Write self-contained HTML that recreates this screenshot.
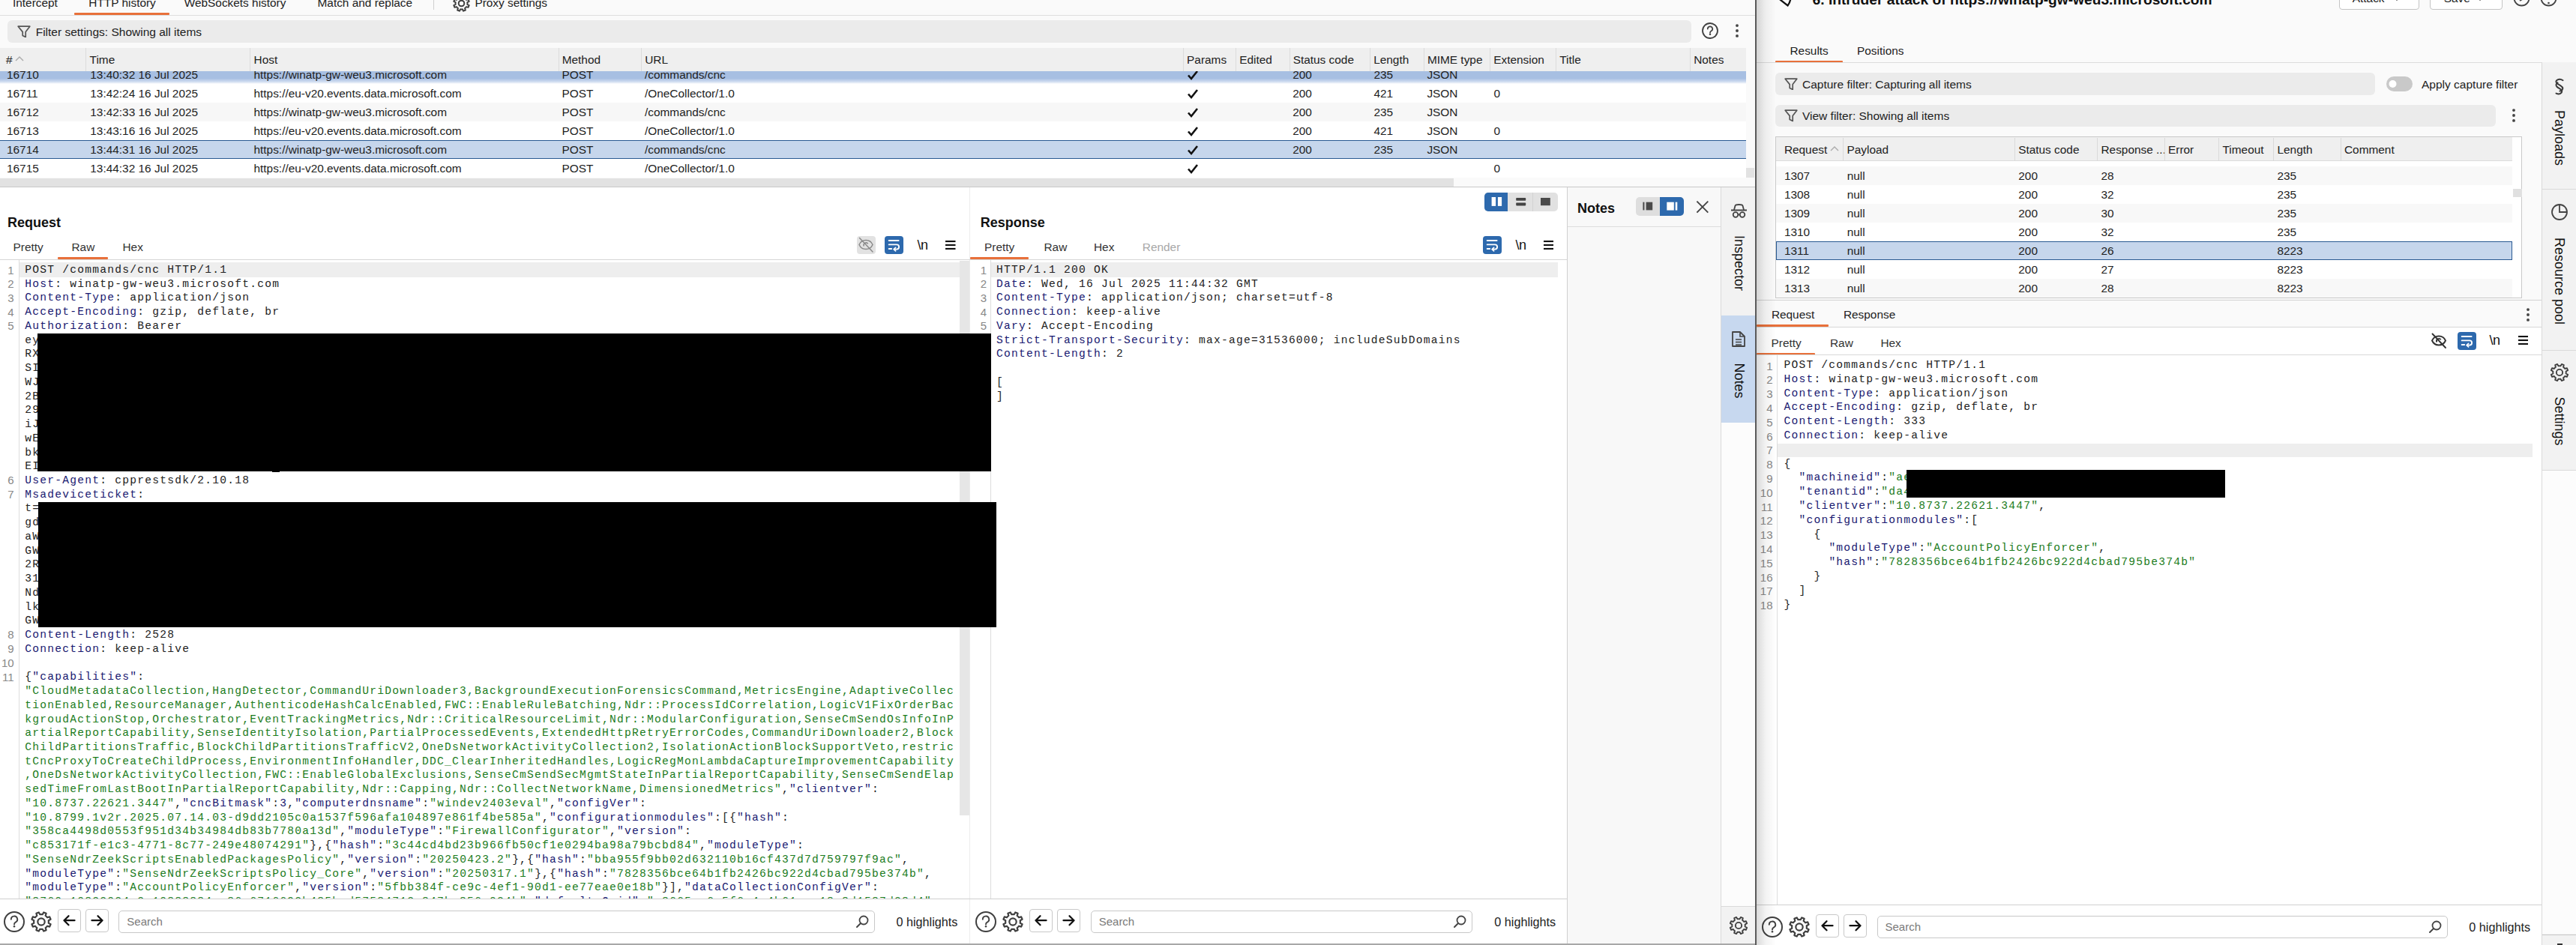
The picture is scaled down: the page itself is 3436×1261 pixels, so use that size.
<!DOCTYPE html><html><head><meta charset="utf-8"><style>
*{margin:0;padding:0;box-sizing:border-box}
html,body{width:3436px;height:1261px;overflow:hidden;background:#fafafa;font-family:"Liberation Sans",sans-serif;font-size:15px;color:#1f1f1f}
div,span.a,svg{position:absolute}
.t{white-space:pre}
.code{font-family:"Liberation Mono",monospace;font-size:14.6px;letter-spacing:1.239px;white-space:pre;color:#222}
.k{color:#181870}.g{color:#1b7c1c}.p{color:#222}
.ln{font-family:"Liberation Sans",sans-serif;font-size:15px;color:#888;text-align:right;white-space:pre}
</style></head><body>
<div class="t" style="left:17px;top:-6px;line-height:20px;font-size:15.4px;color:#222">Intercept</div>
<div class="t" style="left:118.3px;top:-6px;line-height:20px;font-size:15.4px;color:#222">HTTP history</div>
<div class="t" style="left:245.7px;top:-6px;line-height:20px;font-size:15.4px;color:#222">WebSockets history</div>
<div class="t" style="left:423.5px;top:-6px;line-height:20px;font-size:15.4px;color:#222">Match and replace</div>
<div class="t" style="left:633.4px;top:-6px;line-height:20px;font-size:15.4px;color:#222">Proxy settings</div>
<div style="left:99px;top:17px;width:127px;height:2.6px;background:#e8703a;border-radius:1px"></div>
<div style="left:578px;top:0px;width:1px;height:12.5px;background:#d0d0d0"></div>
<svg style="left:602.3px;top:-8.8px;" width="27" height="27" viewBox="0 0 27 27"><path d="M13.50,5.52 L14.87,5.64 L16.11,3.33 L18.84,4.46 L18.09,6.97 L19.14,7.86 L20.03,8.91 L22.54,8.16 L23.67,10.89 L21.36,12.13 L21.48,13.50 L21.36,14.87 L23.67,16.11 L22.54,18.84 L20.03,18.09 L19.14,19.14 L18.09,20.03 L18.84,22.54 L16.11,23.67 L14.87,21.36 L13.50,21.48 L12.13,21.36 L10.89,23.67 L8.16,22.54 L8.91,20.03 L7.86,19.14 L6.97,18.09 L4.46,18.84 L3.33,16.11 L5.64,14.87 L5.52,13.50 L5.64,12.13 L3.33,10.89 L4.46,8.16 L6.97,8.91 L7.86,7.86 L8.91,6.97 L8.16,4.46 L10.89,3.33 L12.13,5.64Z" fill="none" stroke="#404040" stroke-width="2" stroke-linejoin="round"/><circle cx="13.5" cy="13.5" r="3.78" fill="none" stroke="#404040" stroke-width="2"/></svg>
<div style="left:0px;top:20px;width:2341px;height:1px;background:#dedede"></div>
<div style="left:10px;top:27px;width:2246px;height:30px;background:#ebebeb;border-radius:6px"></div>
<svg style="left:22.5px;top:33.5px;" width="18" height="16.5" viewBox="0 0 18 16.5"><path d="M1.2,1.2 H16.8 L11.2,8.6 V15.5 L7.2,13.5 V8.6 Z" fill="none" stroke="#555" stroke-width="1.7" stroke-linejoin="round"/></svg>
<div class="t" style="left:47.7px;top:32.80px;line-height:20px;font-size:15.5px;color:#222">Filter settings: Showing all items</div>
<svg style="left:2268.9px;top:29.200000000000003px;" width="24" height="24" viewBox="0 0 24 24"><circle cx="12.0" cy="12.0" r="10" fill="none" stroke="#404040" stroke-width="1.8"/><g transform="translate(12.00,12.00) scale(0.769)"><path d="M-4.2,-3.2 a4.2,4.2 0 1 1 6.0,3.8 c-1.5,0.8 -1.8,1.5 -1.8,2.9" fill="none" stroke="#404040" stroke-width="2.22" stroke-linecap="round"/><circle cx="0" cy="6.3" r="1.62" fill="#404040"/></g></svg>
<svg style="left:2311px;top:31.200000000000003px;" width="12" height="20" viewBox="0 0 12 20"><circle cx="6" cy="3.1" r="1.95" fill="#444"/><circle cx="6" cy="10.0" r="1.95" fill="#444"/><circle cx="6" cy="16.9" r="1.95" fill="#444"/></svg>
<div style="left:0px;top:64px;width:2329px;height:30.5px;background:#efefef"></div>
<div class="t" style="left:8px;top:70.00px;line-height:20px;font-size:15.4px;color:#222">#</div>
<div style="left:114.4px;top:64px;width:1px;height:30.5px;background:#dcdcdc"></div>
<div class="t" style="left:119.60000000000001px;top:70.00px;line-height:20px;font-size:15.4px;color:#222">Time</div>
<div style="left:333.4px;top:64px;width:1px;height:30.5px;background:#dcdcdc"></div>
<div class="t" style="left:338.59999999999997px;top:70.00px;line-height:20px;font-size:15.4px;color:#222">Host</div>
<div style="left:744.5px;top:64px;width:1px;height:30.5px;background:#dcdcdc"></div>
<div class="t" style="left:749.7px;top:70.00px;line-height:20px;font-size:15.4px;color:#222">Method</div>
<div style="left:855px;top:64px;width:1px;height:30.5px;background:#dcdcdc"></div>
<div class="t" style="left:860.2px;top:70.00px;line-height:20px;font-size:15.4px;color:#222">URL</div>
<div style="left:1577.9px;top:64px;width:1px;height:30.5px;background:#dcdcdc"></div>
<div class="t" style="left:1583.1000000000001px;top:70.00px;line-height:20px;font-size:15.4px;color:#222">Params</div>
<div style="left:1648px;top:64px;width:1px;height:30.5px;background:#dcdcdc"></div>
<div class="t" style="left:1653.2px;top:70.00px;line-height:20px;font-size:15.4px;color:#222">Edited</div>
<div style="left:1719.5px;top:64px;width:1px;height:30.5px;background:#dcdcdc"></div>
<div class="t" style="left:1724.7px;top:70.00px;line-height:20px;font-size:15.4px;color:#222">Status code</div>
<div style="left:1827px;top:64px;width:1px;height:30.5px;background:#dcdcdc"></div>
<div class="t" style="left:1832.2px;top:70.00px;line-height:20px;font-size:15.4px;color:#222">Length</div>
<div style="left:1898.7px;top:64px;width:1px;height:30.5px;background:#dcdcdc"></div>
<div class="t" style="left:1903.9px;top:70.00px;line-height:20px;font-size:15.4px;color:#222">MIME type</div>
<div style="left:1987px;top:64px;width:1px;height:30.5px;background:#dcdcdc"></div>
<div class="t" style="left:1992.2px;top:70.00px;line-height:20px;font-size:15.4px;color:#222">Extension</div>
<div style="left:2075px;top:64px;width:1px;height:30.5px;background:#dcdcdc"></div>
<div class="t" style="left:2080.2px;top:70.00px;line-height:20px;font-size:15.4px;color:#222">Title</div>
<div style="left:2254px;top:64px;width:1px;height:30.5px;background:#dcdcdc"></div>
<div class="t" style="left:2259.2px;top:70.00px;line-height:20px;font-size:15.4px;color:#222">Notes</div>
<svg style="left:20px;top:74px;" width="12" height="8" viewBox="0 0 12 8"><path d="M1,7 L6,2 L11,7" fill="none" stroke="#aaa" stroke-width="1.4"/></svg>
<div style="left:0;top:94.5px;width:2329px;height:142.5px;overflow:hidden;background:#fff">
<div style="left:0;top:-7.5px;width:2329px;height:25px;background:linear-gradient(#a7bfe2 0%,#a7bfe2 70%,#cfdcf0 88%,#fff 100%)"></div>
<div class="t" style="left:9px;top:-5.00px;line-height:20px;font-size:15.4px;color:#1e1e1e">16710</div>
<div class="t" style="left:120.3px;top:-5.00px;line-height:20px;font-size:15.4px;color:#1e1e1e">13:40:32 16 Jul 2025</div>
<div class="t" style="left:338.5px;top:-5.00px;line-height:20px;font-size:15.4px;color:#1e1e1e">https://winatp-gw-weu3.microsoft.com</div>
<div class="t" style="left:749.4px;top:-5.00px;line-height:20px;font-size:15.4px;color:#1e1e1e">POST</div>
<div class="t" style="left:860px;top:-5.00px;line-height:20px;font-size:15.4px;color:#1e1e1e">/commands/cnc</div>
<div class="t" style="left:1724.2px;top:-5.00px;line-height:20px;font-size:15.4px;color:#1e1e1e">200</div>
<div class="t" style="left:1832.5px;top:-5.00px;line-height:20px;font-size:15.4px;color:#1e1e1e">235</div>
<div class="t" style="left:1903.4px;top:-5.00px;line-height:20px;font-size:15.4px;color:#1e1e1e">JSON</div>
<svg style="left:1581.6px;top:-4.0px;" width="18" height="18" viewBox="0 0 18 18"><path d="M3,9.5 L7,14 L15,4" fill="none" stroke="#111" stroke-width="2.6" stroke-linejoin="miter"/></svg>
<div style="left:0;top:17.5px;width:2329px;height:25px;background:#fff"></div>
<div class="t" style="left:9px;top:20.00px;line-height:20px;font-size:15.4px;color:#1e1e1e">16711</div>
<div class="t" style="left:120.3px;top:20.00px;line-height:20px;font-size:15.4px;color:#1e1e1e">13:42:24 16 Jul 2025</div>
<div class="t" style="left:338.5px;top:20.00px;line-height:20px;font-size:15.4px;color:#1e1e1e">https://eu-v20.events.data.microsoft.com</div>
<div class="t" style="left:749.4px;top:20.00px;line-height:20px;font-size:15.4px;color:#1e1e1e">POST</div>
<div class="t" style="left:860px;top:20.00px;line-height:20px;font-size:15.4px;color:#1e1e1e">/OneCollector/1.0</div>
<div class="t" style="left:1724.2px;top:20.00px;line-height:20px;font-size:15.4px;color:#1e1e1e">200</div>
<div class="t" style="left:1832.5px;top:20.00px;line-height:20px;font-size:15.4px;color:#1e1e1e">421</div>
<div class="t" style="left:1903.4px;top:20.00px;line-height:20px;font-size:15.4px;color:#1e1e1e">JSON</div>
<div class="t" style="left:1992.5px;top:20.00px;line-height:20px;font-size:15.4px;color:#1e1e1e">0</div>
<svg style="left:1581.6px;top:21.0px;" width="18" height="18" viewBox="0 0 18 18"><path d="M3,9.5 L7,14 L15,4" fill="none" stroke="#111" stroke-width="2.6" stroke-linejoin="miter"/></svg>
<div style="left:0;top:42.5px;width:2329px;height:25px;background:#f7f7f7"></div>
<div class="t" style="left:9px;top:45.00px;line-height:20px;font-size:15.4px;color:#1e1e1e">16712</div>
<div class="t" style="left:120.3px;top:45.00px;line-height:20px;font-size:15.4px;color:#1e1e1e">13:42:33 16 Jul 2025</div>
<div class="t" style="left:338.5px;top:45.00px;line-height:20px;font-size:15.4px;color:#1e1e1e">https://winatp-gw-weu3.microsoft.com</div>
<div class="t" style="left:749.4px;top:45.00px;line-height:20px;font-size:15.4px;color:#1e1e1e">POST</div>
<div class="t" style="left:860px;top:45.00px;line-height:20px;font-size:15.4px;color:#1e1e1e">/commands/cnc</div>
<div class="t" style="left:1724.2px;top:45.00px;line-height:20px;font-size:15.4px;color:#1e1e1e">200</div>
<div class="t" style="left:1832.5px;top:45.00px;line-height:20px;font-size:15.4px;color:#1e1e1e">235</div>
<div class="t" style="left:1903.4px;top:45.00px;line-height:20px;font-size:15.4px;color:#1e1e1e">JSON</div>
<svg style="left:1581.6px;top:46.0px;" width="18" height="18" viewBox="0 0 18 18"><path d="M3,9.5 L7,14 L15,4" fill="none" stroke="#111" stroke-width="2.6" stroke-linejoin="miter"/></svg>
<div style="left:0;top:67.5px;width:2329px;height:25px;background:#fff"></div>
<div class="t" style="left:9px;top:70.00px;line-height:20px;font-size:15.4px;color:#1e1e1e">16713</div>
<div class="t" style="left:120.3px;top:70.00px;line-height:20px;font-size:15.4px;color:#1e1e1e">13:43:16 16 Jul 2025</div>
<div class="t" style="left:338.5px;top:70.00px;line-height:20px;font-size:15.4px;color:#1e1e1e">https://eu-v20.events.data.microsoft.com</div>
<div class="t" style="left:749.4px;top:70.00px;line-height:20px;font-size:15.4px;color:#1e1e1e">POST</div>
<div class="t" style="left:860px;top:70.00px;line-height:20px;font-size:15.4px;color:#1e1e1e">/OneCollector/1.0</div>
<div class="t" style="left:1724.2px;top:70.00px;line-height:20px;font-size:15.4px;color:#1e1e1e">200</div>
<div class="t" style="left:1832.5px;top:70.00px;line-height:20px;font-size:15.4px;color:#1e1e1e">421</div>
<div class="t" style="left:1903.4px;top:70.00px;line-height:20px;font-size:15.4px;color:#1e1e1e">JSON</div>
<div class="t" style="left:1992.5px;top:70.00px;line-height:20px;font-size:15.4px;color:#1e1e1e">0</div>
<svg style="left:1581.6px;top:71.0px;" width="18" height="18" viewBox="0 0 18 18"><path d="M3,9.5 L7,14 L15,4" fill="none" stroke="#111" stroke-width="2.6" stroke-linejoin="miter"/></svg>
<div style="left:0;top:92.5px;width:2329px;height:25px;background:#c6d6ec;border-top:1px solid #2a5a92;border-bottom:1px solid #2a5a92"></div>
<div class="t" style="left:9px;top:95.00px;line-height:20px;font-size:15.4px;color:#1e1e1e">16714</div>
<div class="t" style="left:120.3px;top:95.00px;line-height:20px;font-size:15.4px;color:#1e1e1e">13:44:31 16 Jul 2025</div>
<div class="t" style="left:338.5px;top:95.00px;line-height:20px;font-size:15.4px;color:#1e1e1e">https://winatp-gw-weu3.microsoft.com</div>
<div class="t" style="left:749.4px;top:95.00px;line-height:20px;font-size:15.4px;color:#1e1e1e">POST</div>
<div class="t" style="left:860px;top:95.00px;line-height:20px;font-size:15.4px;color:#1e1e1e">/commands/cnc</div>
<div class="t" style="left:1724.2px;top:95.00px;line-height:20px;font-size:15.4px;color:#1e1e1e">200</div>
<div class="t" style="left:1832.5px;top:95.00px;line-height:20px;font-size:15.4px;color:#1e1e1e">235</div>
<div class="t" style="left:1903.4px;top:95.00px;line-height:20px;font-size:15.4px;color:#1e1e1e">JSON</div>
<svg style="left:1581.6px;top:96.0px;" width="18" height="18" viewBox="0 0 18 18"><path d="M3,9.5 L7,14 L15,4" fill="none" stroke="#111" stroke-width="2.6" stroke-linejoin="miter"/></svg>
<div style="left:0;top:117.5px;width:2329px;height:25px;background:#fff"></div>
<div class="t" style="left:9px;top:120.00px;line-height:20px;font-size:15.4px;color:#1e1e1e">16715</div>
<div class="t" style="left:120.3px;top:120.00px;line-height:20px;font-size:15.4px;color:#1e1e1e">13:44:32 16 Jul 2025</div>
<div class="t" style="left:338.5px;top:120.00px;line-height:20px;font-size:15.4px;color:#1e1e1e">https://eu-v20.events.data.microsoft.com</div>
<div class="t" style="left:749.4px;top:120.00px;line-height:20px;font-size:15.4px;color:#1e1e1e">POST</div>
<div class="t" style="left:860px;top:120.00px;line-height:20px;font-size:15.4px;color:#1e1e1e">/OneCollector/1.0</div>
<div class="t" style="left:1992.5px;top:120.00px;line-height:20px;font-size:15.4px;color:#1e1e1e">0</div>
<svg style="left:1581.6px;top:121.0px;" width="18" height="18" viewBox="0 0 18 18"><path d="M3,9.5 L7,14 L15,4" fill="none" stroke="#111" stroke-width="2.6" stroke-linejoin="miter"/></svg>
</div>
<div style="left:0px;top:237.6px;width:1939px;height:11px;background:#e2e2e2"></div>
<div style="left:2329.3px;top:224.4px;width:11px;height:12.4px;background:#e2e2e2"></div>
<div style="left:0px;top:249px;width:2341px;height:1.2px;background:#c8c8c8"></div>
<div style="left:0px;top:250px;width:1293px;height:1009px;background:#fff"></div>
<div class="t" style="left:10px;top:285px;line-height:24px;font-size:18px;font-weight:bold;color:#111">Request</div>
<div class="t" style="left:17.5px;top:320.20px;line-height:20px;font-size:15.4px;color:#333">Pretty</div>
<div class="t" style="left:95.5px;top:320.20px;line-height:20px;font-size:15.4px;color:#333">Raw</div>
<div class="t" style="left:163.5px;top:320.20px;line-height:20px;font-size:15.4px;color:#333">Hex</div>
<div style="left:76.5px;top:343px;width:67.5px;height:3px;background:#e8703a;border-radius:1px"></div>
<div style="left:0px;top:345.8px;width:1293px;height:1px;background:#d6d6d6"></div>
<div style="left:1143px;top:315px;width:24.5px;height:23.5px;background:#e2e2e2;border-radius:4px"></div>
<svg style="left:1143px;top:315px;" width="24.5" height="23.5" viewBox="0 0 24.5 23.5"><path d="M3,11.5 C6.5,3.5 17.5,3.5 21,11.5 C17.5,19.5 6.5,19.5 3,11.5 Z" fill="none" stroke="#8a8a8a" stroke-width="1.5"/><path d="M9.3,13.5 a3.2,3.2 0 0 1 5.5,-3.2" fill="none" stroke="#8a8a8a" stroke-width="1.5"/><path d="M3.5,2.5 L21,21" stroke="#8a8a8a" stroke-width="1.5" stroke-linecap="round"/></svg>
<div style="left:1180px;top:315px;width:24.6px;height:23.5px;background:#2d69ad;border-radius:4px"></div>
<svg style="left:1180px;top:315px;" width="24.6" height="23.5" viewBox="0 0 24.6 23.5"><path d="M5.7,6.0 H18.6 M5.7,11.4 H16 a3.1,3.1 0 0 1 0,6.2 H12.6 M5.7,17.0 H9.2" fill="none" stroke="#fff" stroke-width="1.9" stroke-linecap="round"/><path d="M14.6,15.3 L12.2,17.6 L14.6,19.9" fill="none" stroke="#fff" stroke-width="1.7" stroke-linecap="round" stroke-linejoin="round"/></svg>
<div class="t" style="left:1223.6px;top:316.00px;line-height:22px;font-size:18px;color:#111;letter-spacing:-0.5px">\n</div>
<svg style="left:1261px;top:321.0px;" width="13.5" height="14" viewBox="0 0 13.5 14"><rect x="0" y="0.00" width="13.5" height="2.1" fill="#111"/><rect x="0" y="4.95" width="13.5" height="2.1" fill="#111"/><rect x="0" y="9.90" width="13.5" height="2.1" fill="#111"/></svg>
<div style="left:25.3px;top:346.8px;width:1px;height:852.2px;background:#dddddd"></div>
<div style="left:26px;top:349.8px;width:1254px;height:20px;background:#eeeeee"></div>
<div style="left:0;top:347.5px;width:1280px;height:851.5px;overflow:hidden">
<div class="ln" style="left:0;top:3.50px;width:18.7px;line-height:18.73px;top:4.00px">1</div>
<div class="ln" style="left:0;top:22.23px;width:18.7px;line-height:18.73px;top:22.73px">2</div>
<div class="ln" style="left:0;top:40.96px;width:18.7px;line-height:18.73px;top:41.46px">3</div>
<div class="ln" style="left:0;top:59.69px;width:18.7px;line-height:18.73px;top:60.19px">4</div>
<div class="ln" style="left:0;top:78.42px;width:18.7px;line-height:18.73px;top:78.92px">5</div>
<div class="ln" style="left:0;top:284.45px;width:18.7px;line-height:18.73px;top:284.95px">6</div>
<div class="ln" style="left:0;top:303.18px;width:18.7px;line-height:18.73px;top:303.68px">7</div>
<div class="ln" style="left:0;top:490.48px;width:18.7px;line-height:18.73px;top:490.98px">8</div>
<div class="ln" style="left:0;top:509.21px;width:18.7px;line-height:18.73px;top:509.71px">9</div>
<div class="ln" style="left:0;top:527.94px;width:18.7px;line-height:18.73px;top:528.44px">10</div>
<div class="ln" style="left:0;top:546.67px;width:18.7px;line-height:18.73px;top:547.17px">11</div>
<div class="code" style="left:33.3px;top:3.5px;line-height:18.73px">POST /commands/cnc HTTP/1.1
<span class="k">Host</span>: winatp-gw-weu3.microsoft.com
<span class="k">Content-Type</span>: application/json
<span class="k">Accept-Encoding</span>: gzip, deflate, br
<span class="k">Authorization</span>: Bearer
ey
RX
SI
WJ
2B
29
iJ
wE
bk
EI
<span class="k">User-Agent</span>: cpprestsdk/2.10.18
<span class="k">Msadeviceticket</span>:
t=
gd
aW
GW
2R
31
Nd
lk
GW
<span class="k">Content-Length</span>: 2528
<span class="k">Connection</span>: keep-alive

{<span class="k">"capabilities"</span>:
<span class="g">"CloudMetadataCollection,HangDetector,CommandUriDownloader3,BackgroundExecutionForensicsCommand,MetricsEngine,AdaptiveCollec</span>
<span class="g">tionEnabled,ResourceManager,AuthenticodeHashCalcEnabled,FWC::EnableRuleBatching,Ndr::ProcessIdCorrelation,LogicV1FixOrderBac</span>
<span class="g">kgroudActionStop,Orchestrator,EventTrackingMetrics,Ndr::CriticalResourceLimit,Ndr::ModularConfiguration,SenseCmSendOsInfoInP</span>
<span class="g">artialReportCapability,SenseIdentityIsolation,PartialProcessedEvents,ExtendedHttpRetryErrorCodes,CommandUriDownloader2,Block</span>
<span class="g">ChildPartitionsTraffic,BlockChildPartitionsTrafficV2,OneDsNetworkActivityCollection2,IsolationActionBlockSupportVeto,restric</span>
<span class="g">tCncProxyToCreateChildProcess,EnvironmentInfoHandler,DDC_ClearInheritedHandles,LogicRegMonLambdaCaptureImprovementCapability</span>
<span class="g">,OneDsNetworkActivityCollection,FWC::EnableGlobalExclusions,SenseCmSendSecMgmtStateInPartialReportCapability,SenseCmSendElap</span>
<span class="g">sedTimeFromLastBootInPartialReportCapability,Ndr::Capping,Ndr::CollectNetworkName,DimensionedMetrics"</span>,<span class="k">"clientver"</span>:
<span class="g">"10.8737.22621.3447"</span>,<span class="k">"cncBitmask"</span>:<span class="k">3</span>,<span class="k">"computerdnsname"</span>:<span class="g">"windev2403eval"</span>,<span class="k">"configVer"</span>:
<span class="g">"10.8799.1v2r.2025.07.14.03-d9dd2105c0a1537f596afa104897e861f4be585a"</span>,<span class="k">"configurationmodules"</span>:[{<span class="k">"hash"</span>:
<span class="g">"358ca4498d0553f951d34b34984db83b7780a13d"</span>,<span class="k">"moduleType"</span>:<span class="g">"FirewallConfigurator"</span>,<span class="k">"version"</span>:
<span class="g">"c853171f-e1c3-4771-8c77-249e48074291"</span>},{<span class="k">"hash"</span>:<span class="g">"3c44cd4bd23b966fb50cf1e0294ba98a79bcbd84"</span>,<span class="k">"moduleType"</span>:
<span class="g">"SenseNdrZeekScriptsEnabledPackagesPolicy"</span>,<span class="k">"version"</span>:<span class="g">"20250423.2"</span>},{<span class="k">"hash"</span>:<span class="g">"bba955f9bb02d632110b16cf437d7d759797f9ac"</span>,
<span class="k">"moduleType"</span>:<span class="g">"SenseNdrZeekScriptsPolicy_Core"</span>,<span class="k">"version"</span>:<span class="g">"20250317.1"</span>},{<span class="k">"hash"</span>:<span class="g">"7828356bce64b1fb2426bc922d4cbad795be374b"</span>,
<span class="k">"moduleType"</span>:<span class="g">"AccountPolicyEnforcer"</span>,<span class="k">"version"</span>:<span class="g">"5fbb384f-ce9c-4ef1-90d1-ee77eae0e18b"</span>}],<span class="k">"dataCollectionConfigVer"</span>:
<span class="g">"8760-10822024-2-10888884-a86-6716692b485b-d57584712-847b-856-024b"</span>,<span class="k">"defaultsGuid"</span>:<span class="g">"c8665ac6c5f6c4c4b61ace18c8d1587d28d4"</span></div>
</div>
<div style="left:1280px;top:347.5px;width:12.5px;height:740px;background:#e6e6e6"></div>
<div style="left:1292.6px;top:250px;width:1px;height:1009px;background:#ececec"></div>
<div style="left:0px;top:1199px;width:1293px;height:1px;background:#d0d0d0"></div>
<svg style="left:4.0px;top:1214.5px;" width="30" height="30" viewBox="0 0 30 30"><circle cx="15.0" cy="15.0" r="13" fill="none" stroke="#404040" stroke-width="2"/><g transform="translate(15.00,15.00) scale(1.000)"><path d="M-4.2,-3.2 a4.2,4.2 0 1 1 6.0,3.8 c-1.5,0.8 -1.8,1.5 -1.8,2.9" fill="none" stroke="#404040" stroke-width="1.90" stroke-linecap="round"/><circle cx="0" cy="6.3" r="1.25" fill="#404040"/></g></svg>
<svg style="left:39.0px;top:1213.5px;" width="32" height="32" viewBox="0 0 32 32"><path d="M16.00,6.12 L17.70,6.27 L19.23,3.41 L22.62,4.81 L21.68,7.92 L22.99,9.01 L24.08,10.32 L27.19,9.38 L28.59,12.77 L25.73,14.30 L25.88,16.00 L25.73,17.70 L28.59,19.23 L27.19,22.62 L24.08,21.68 L22.99,22.99 L21.68,24.08 L22.62,27.19 L19.23,28.59 L17.70,25.73 L16.00,25.88 L14.30,25.73 L12.77,28.59 L9.38,27.19 L10.32,24.08 L9.01,22.99 L7.92,21.68 L4.81,22.62 L3.41,19.23 L6.27,17.70 L6.12,16.00 L6.27,14.30 L3.41,12.77 L4.81,9.38 L7.92,10.32 L9.01,9.01 L10.32,7.92 L9.38,4.81 L12.77,3.41 L14.30,6.27Z" fill="none" stroke="#404040" stroke-width="2.2" stroke-linejoin="round"/><circle cx="16.0" cy="16.0" r="4.68" fill="none" stroke="#404040" stroke-width="2.2"/></svg>
<div style="left:76.5px;top:1213.2px;width:31px;height:30.5px;border:1px solid #c8c8c8;border-radius:4px;background:#fff"></div>
<svg style="left:76.5px;top:1213.2px;" width="31" height="30.5" viewBox="0 0 31 30.5"><path d="M22.5,15.2 H8.5 M14.5,9.2 L8.5,15.2 L14.5,21.2" fill="none" stroke="#111" stroke-width="2.3" stroke-linecap="round" stroke-linejoin="round"/></svg>
<div style="left:114.3px;top:1213.2px;width:31px;height:30.5px;border:1px solid #c8c8c8;border-radius:4px;background:#fff"></div>
<svg style="left:114.3px;top:1213.2px;" width="31" height="30.5" viewBox="0 0 31 30.5"><path d="M8.5,15.2 H22.5 M16.5,9.2 L22.5,15.2 L16.5,21.2" fill="none" stroke="#111" stroke-width="2.3" stroke-linecap="round" stroke-linejoin="round"/></svg>
<div style="left:158.3px;top:1214.5px;width:1008.7px;height:30px;border:1px solid #c8c8c8;border-radius:5px;background:#fff"></div>
<div class="t" style="left:169.3px;top:1219.50px;line-height:20px;color:#7a7a7a;font-size:15px">Search</div>
<svg style="left:1141px;top:1220.5px;" width="18" height="18" viewBox="0 0 18 18"><circle cx="11" cy="7" r="5.5" fill="none" stroke="#444" stroke-width="1.8"/><path d="M7,11 L2,16" stroke="#444" stroke-width="2" stroke-linecap="round"/></svg>
<div class="t" style="left:1195.5px;top:1219.50px;line-height:20px;color:#222;font-size:16.2px">0 highlights</div>
<div style="left:1293.6px;top:250px;width:797px;height:1009px;background:#fff"></div>
<div class="t" style="left:1307.8px;top:285px;line-height:24px;font-size:18px;font-weight:bold;color:#111">Response</div>
<div style="left:1980px;top:257px;width:97.5px;height:25px;background:#e1e1e1;border-radius:5px"></div>
<div style="left:1980px;top:257px;width:31px;height:25px;background:#2d69ad;border-radius:5px 0 0 5px"></div>
<div style="left:2044.3px;top:257px;width:1px;height:25px;background:#d2d2d2"></div>
<svg style="left:1980px;top:257px;" width="97.5" height="25" viewBox="0 0 97.5 25"><rect x="9.6" y="6" width="5.5" height="11.9" fill="#fff"/><rect x="17.9" y="6" width="5.2" height="11.9" fill="#fff"/><rect x="42.2" y="7" width="13" height="3.7" rx="0.8" fill="#444"/><rect x="42.2" y="13.6" width="13" height="3.8" rx="0.8" fill="#444"/><rect x="75" y="7" width="12.8" height="10.2" fill="#4a4a4a"/></svg>
<div class="t" style="left:1313px;top:320.20px;line-height:20px;font-size:15.4px;color:#333">Pretty</div>
<div class="t" style="left:1392.5px;top:320.20px;line-height:20px;font-size:15.4px;color:#333">Raw</div>
<div class="t" style="left:1459px;top:320.20px;line-height:20px;font-size:15.4px;color:#333">Hex</div>
<div class="t" style="left:1523.8px;top:320.20px;line-height:20px;font-size:15.4px;color:#a8a8a8">Render</div>
<div style="left:1294px;top:343px;width:78.4px;height:3px;background:#e8703a;border-radius:1px"></div>
<div style="left:1293px;top:345.8px;width:797px;height:1px;background:#d6d6d6"></div>
<div style="left:1977.7px;top:315.3px;width:25.3px;height:23.5px;background:#2d69ad;border-radius:4px"></div>
<svg style="left:1977.7px;top:315.3px;" width="25.3" height="23.5" viewBox="0 0 25.3 23.5"><path d="M5.7,6.0 H18.6 M5.7,11.4 H16 a3.1,3.1 0 0 1 0,6.2 H12.6 M5.7,17.0 H9.2" fill="none" stroke="#fff" stroke-width="1.9" stroke-linecap="round"/><path d="M14.6,15.3 L12.2,17.6 L14.6,19.9" fill="none" stroke="#fff" stroke-width="1.7" stroke-linecap="round" stroke-linejoin="round"/></svg>
<div class="t" style="left:2021.6px;top:316.00px;line-height:22px;font-size:18px;color:#111;letter-spacing:-0.5px">\n</div>
<svg style="left:2058.8px;top:321.0px;" width="13.5" height="14" viewBox="0 0 13.5 14"><rect x="0" y="0.00" width="13.5" height="2.1" fill="#111"/><rect x="0" y="4.95" width="13.5" height="2.1" fill="#111"/><rect x="0" y="9.90" width="13.5" height="2.1" fill="#111"/></svg>
<div style="left:1321.3px;top:346.8px;width:1px;height:852.2px;background:#dddddd"></div>
<div style="left:1322px;top:349.8px;width:756px;height:20px;background:#eeeeee"></div>
<div class="ln" style="left:1293px;top:351.50px;width:23px;line-height:18.73px">1</div>
<div class="ln" style="left:1293px;top:370.23px;width:23px;line-height:18.73px">2</div>
<div class="ln" style="left:1293px;top:388.96px;width:23px;line-height:18.73px">3</div>
<div class="ln" style="left:1293px;top:407.69px;width:23px;line-height:18.73px">4</div>
<div class="ln" style="left:1293px;top:426.42px;width:23px;line-height:18.73px">5</div>
<div class="ln" style="left:1293px;top:445.15px;width:23px;line-height:18.73px">6</div>
<div class="ln" style="left:1293px;top:463.88px;width:23px;line-height:18.73px">7</div>
<div class="ln" style="left:1293px;top:482.61px;width:23px;line-height:18.73px">8</div>
<div class="ln" style="left:1293px;top:501.34px;width:23px;line-height:18.73px">9</div>
<div class="ln" style="left:1293px;top:520.07px;width:23px;line-height:18.73px">10</div>
<div class="code" style="left:1329px;top:351.0px;line-height:18.73px">HTTP/1.1 200 OK
<span class="k">Date</span>: Wed, 16 Jul 2025 11:44:32 GMT
<span class="k">Content-Type</span>: application/json; charset=utf-8
<span class="k">Connection</span>: keep-alive
<span class="k">Vary</span>: Accept-Encoding
<span class="k">Strict-Transport-Security</span>: max-age=31536000; includeSubDomains
<span class="k">Content-Length</span>: 2

[
]</div>
<div style="left:2090.2px;top:250px;width:1px;height:1009px;background:#d0d0d0"></div>
<div style="left:1293px;top:1199px;width:797px;height:1px;background:#d0d0d0"></div>
<svg style="left:1300.2px;top:1214.5px;" width="30" height="30" viewBox="0 0 30 30"><circle cx="15.0" cy="15.0" r="13" fill="none" stroke="#404040" stroke-width="2"/><g transform="translate(15.00,15.00) scale(1.000)"><path d="M-4.2,-3.2 a4.2,4.2 0 1 1 6.0,3.8 c-1.5,0.8 -1.8,1.5 -1.8,2.9" fill="none" stroke="#404040" stroke-width="1.90" stroke-linecap="round"/><circle cx="0" cy="6.3" r="1.25" fill="#404040"/></g></svg>
<svg style="left:1335.0px;top:1213.5px;" width="32" height="32" viewBox="0 0 32 32"><path d="M16.00,6.12 L17.70,6.27 L19.23,3.41 L22.62,4.81 L21.68,7.92 L22.99,9.01 L24.08,10.32 L27.19,9.38 L28.59,12.77 L25.73,14.30 L25.88,16.00 L25.73,17.70 L28.59,19.23 L27.19,22.62 L24.08,21.68 L22.99,22.99 L21.68,24.08 L22.62,27.19 L19.23,28.59 L17.70,25.73 L16.00,25.88 L14.30,25.73 L12.77,28.59 L9.38,27.19 L10.32,24.08 L9.01,22.99 L7.92,21.68 L4.81,22.62 L3.41,19.23 L6.27,17.70 L6.12,16.00 L6.27,14.30 L3.41,12.77 L4.81,9.38 L7.92,10.32 L9.01,9.01 L10.32,7.92 L9.38,4.81 L12.77,3.41 L14.30,6.27Z" fill="none" stroke="#404040" stroke-width="2.2" stroke-linejoin="round"/><circle cx="16.0" cy="16.0" r="4.68" fill="none" stroke="#404040" stroke-width="2.2"/></svg>
<div style="left:1373px;top:1213.2px;width:31px;height:30.5px;border:1px solid #c8c8c8;border-radius:4px;background:#fff"></div>
<svg style="left:1373px;top:1213.2px;" width="31" height="30.5" viewBox="0 0 31 30.5"><path d="M22.5,15.2 H8.5 M14.5,9.2 L8.5,15.2 L14.5,21.2" fill="none" stroke="#111" stroke-width="2.3" stroke-linecap="round" stroke-linejoin="round"/></svg>
<div style="left:1410.4px;top:1213.2px;width:31px;height:30.5px;border:1px solid #c8c8c8;border-radius:4px;background:#fff"></div>
<svg style="left:1410.4px;top:1213.2px;" width="31" height="30.5" viewBox="0 0 31 30.5"><path d="M8.5,15.2 H22.5 M16.5,9.2 L22.5,15.2 L16.5,21.2" fill="none" stroke="#111" stroke-width="2.3" stroke-linecap="round" stroke-linejoin="round"/></svg>
<div style="left:1454.7px;top:1214.5px;width:509.5px;height:30px;border:1px solid #c8c8c8;border-radius:5px;background:#fff"></div>
<div class="t" style="left:1465.7px;top:1219.50px;line-height:20px;color:#7a7a7a;font-size:15px">Search</div>
<svg style="left:1938.2px;top:1220.5px;" width="18" height="18" viewBox="0 0 18 18"><circle cx="11" cy="7" r="5.5" fill="none" stroke="#444" stroke-width="1.8"/><path d="M7,11 L2,16" stroke="#444" stroke-width="2" stroke-linecap="round"/></svg>
<div class="t" style="left:1993.3px;top:1219.50px;line-height:20px;color:#222;font-size:16.2px">0 highlights</div>
<div style="left:2091px;top:250px;width:204.5px;height:1009px;background:#f8f8f8"></div>
<div class="t" style="left:2104px;top:265.7px;line-height:24px;font-size:18px;font-weight:bold;color:#111">Notes</div>
<div style="left:2181.8px;top:263.2px;width:64px;height:24.6px;background:#dedede;border-radius:5px"></div>
<div style="left:2214px;top:263.2px;width:31.8px;height:24.6px;background:#2d69ad;border-radius:0 5px 5px 0"></div>
<svg style="left:2181.8px;top:263.2px;" width="64" height="24.6" viewBox="0 0 64 24.6"><rect x="9.4" y="6.7" width="2.0" height="10.7" fill="#4a4a4a"/><rect x="13.6" y="6.7" width="8.6" height="10.7" fill="#4a4a4a"/><rect x="41.3" y="6.7" width="9.5" height="10.9" fill="#fff"/><rect x="52.7" y="6.7" width="2.6" height="10.9" fill="#fff"/></svg>
<svg style="left:2261px;top:267px;" width="20" height="19" viewBox="0 0 20 19"><path d="M2.4,1.7 L17.3,16.7 M17.3,1.7 L2.4,16.7" stroke="#444" stroke-width="1.9"/></svg>
<div style="left:2091px;top:302px;width:204.5px;height:1px;background:#dcdcdc"></div>
<div style="left:2295.3px;top:250px;width:46px;height:1009px;background:#f2f2f2"></div>
<div style="left:2295.3px;top:250px;width:1px;height:1009px;background:#dadada"></div>
<svg style="left:2307px;top:270px;" width="25" height="22" viewBox="0 0 25 22"><path d="M6,10 L7.5,4.5 C8,2.5 17,2.5 17.5,4.5 L19,10" fill="none" stroke="#444" stroke-width="1.8"/><path d="M2,10.5 H23" stroke="#444" stroke-width="2"/><circle cx="8" cy="16.5" r="3.3" fill="none" stroke="#444" stroke-width="1.8"/><circle cx="17" cy="16.5" r="3.3" fill="none" stroke="#444" stroke-width="1.8"/><path d="M11.3,16.5 H13.7" stroke="#444" stroke-width="1.8"/></svg>
<div class="t" style="left:2319.5px;top:350.7px;line-height:20px;font-size:18px;color:#111;transform:translate(-50%,-50%) rotate(90deg)">Inspector</div>
<div style="left:2296.3px;top:421px;width:45px;height:143px;background:#c7d8ef"></div>
<svg style="left:2309px;top:441px;" width="20" height="23" viewBox="0 0 20 23"><path d="M2,2 H12 L18,8 V21 H2 Z" fill="none" stroke="#444" stroke-width="1.8" stroke-linejoin="round"/><path d="M12,2 V8 H18" fill="none" stroke="#444" stroke-width="1.6"/><path d="M6,12 H14 M6,15.5 H14 M6,19 H14" stroke="#444" stroke-width="1.6"/></svg>
<div class="t" style="left:2319.5px;top:508.4px;line-height:20px;font-size:18px;color:#111;transform:translate(-50%,-50%) rotate(90deg)">Notes</div>
<div style="left:2296.3px;top:564px;width:45px;height:645px;background:#fcfcfc"></div>
<div style="left:2296.3px;top:1209.3px;width:45px;height:1px;background:#dadada"></div>
<svg style="left:2305.3px;top:1221.0px;" width="28" height="28" viewBox="0 0 28 28"><path d="M14.00,5.26 L15.50,5.39 L16.86,2.86 L19.85,4.10 L19.03,6.85 L20.18,7.82 L21.15,8.97 L23.90,8.15 L25.14,11.14 L22.61,12.50 L22.74,14.00 L22.61,15.50 L25.14,16.86 L23.90,19.85 L21.15,19.03 L20.18,20.18 L19.03,21.15 L19.85,23.90 L16.86,25.14 L15.50,22.61 L14.00,22.74 L12.50,22.61 L11.14,25.14 L8.15,23.90 L8.97,21.15 L7.82,20.18 L6.85,19.03 L4.10,19.85 L2.86,16.86 L5.39,15.50 L5.26,14.00 L5.39,12.50 L2.86,11.14 L4.10,8.15 L6.85,8.97 L7.82,7.82 L8.97,6.85 L8.15,4.10 L11.14,2.86 L12.50,5.39Z" fill="none" stroke="#404040" stroke-width="1.9" stroke-linejoin="round"/><circle cx="14.0" cy="14.0" r="4.14" fill="none" stroke="#404040" stroke-width="1.9"/></svg>
<div style="left:0px;top:1259px;width:2341px;height:2px;background:#a8a8a8"></div>
<div style="left:2341px;top:0px;width:1095px;height:1261px;background:#fafafa"></div>
<div class="t" style="left:2417.6px;top:-12.5px;line-height:24px;font-size:19.2px;font-weight:bold;color:#111">6. Intruder attack of https://winatp-gw-weu3.microsoft.com</div>
<svg style="left:2368px;top:-6px;" width="26" height="16" viewBox="0 0 26 16"><path d="M2,2 L16.5,13.5 Q20,9 20.5,3" fill="none" stroke="#111" stroke-width="2.3" stroke-linejoin="miter"/></svg>
<div style="left:3119.6px;top:-10px;width:107.70000000000027px;height:22.5px;border:1px solid #c4c4c4;border-radius:4px;background:#fff"></div>
<div class="t" style="left:3137.7999999999997px;top:-12.4px;line-height:20px;font-size:15.4px;color:#222">Attack</div>
<svg style="left:3192px;top:-3px;" width="10" height="6" viewBox="0 0 10 6"><path d="M1,0 L5,4 L9,0 Z" fill="#222"/></svg>
<div style="left:3240.6px;top:-10px;width:97.80000000000018px;height:22.5px;border:1px solid #c4c4c4;border-radius:4px;background:#fff"></div>
<div class="t" style="left:3259.7999999999997px;top:-12.4px;line-height:20px;font-size:15.4px;color:#222">Save</div>
<svg style="left:3303.4px;top:-3px;" width="10" height="6" viewBox="0 0 10 6"><path d="M1,0 L5,4 L9,0 Z" fill="#222"/></svg>
<svg style="left:3352px;top:-14px;" width="24" height="24" viewBox="0 0 24 24"><circle cx="11.5" cy="11.5" r="10" fill="none" stroke="#444" stroke-width="1.9"/><path d="M9,8 L15,11.5 L9,15" fill="none" stroke="#444" stroke-width="1.8"/></svg>
<svg style="left:3388px;top:-14px;" width="24" height="24" viewBox="0 0 24 24"><circle cx="11.5" cy="11.5" r="10" fill="none" stroke="#444" stroke-width="1.9"/><circle cx="11.5" cy="18" r="1.3" fill="#444"/></svg>
<div class="t" style="left:2387.5px;top:58.20px;line-height:20px;font-size:15.4px;color:#222">Results</div>
<div class="t" style="left:2477px;top:58.20px;line-height:20px;font-size:15.4px;color:#222">Positions</div>
<div style="left:2368px;top:80.5px;width:89.7px;height:3px;background:#e8703a;border-radius:1px"></div>
<div style="left:2341px;top:83px;width:1049px;height:1px;background:#dcdcdc"></div>
<div style="left:2368px;top:97px;width:800px;height:29.6px;background:#ebebeb;border-radius:6px"></div>
<svg style="left:2380px;top:103.5px;" width="18" height="16.5" viewBox="0 0 18 16.5"><path d="M1.2,1.2 H16.8 L11.2,8.6 V15.5 L7.2,13.5 V8.6 Z" fill="none" stroke="#555" stroke-width="1.7" stroke-linejoin="round"/></svg>
<div class="t" style="left:2404px;top:102.80px;line-height:20px;font-size:15.5px;color:#222">Capture filter: Capturing all items</div>
<div style="left:3182.6px;top:102px;width:35.2px;height:19.6px;background:#c9c9c9;border-radius:10px"></div>
<svg style="left:3185px;top:104.5px;" width="15" height="15" viewBox="0 0 15 15"><circle cx="6.5" cy="7" r="5" fill="#fff"/></svg>
<div class="t" style="left:3230px;top:103.00px;line-height:20px;font-size:15.5px;color:#222">Apply capture filter</div>
<div style="left:2368px;top:139.5px;width:961px;height:29px;background:#ebebeb;border-radius:6px"></div>
<svg style="left:2380px;top:146px;" width="18" height="16.5" viewBox="0 0 18 16.5"><path d="M1.2,1.2 H16.8 L11.2,8.6 V15.5 L7.2,13.5 V8.6 Z" fill="none" stroke="#555" stroke-width="1.7" stroke-linejoin="round"/></svg>
<div class="t" style="left:2404px;top:144.80px;line-height:20px;font-size:15.5px;color:#222">View filter: Showing all items</div>
<svg style="left:3347px;top:144px;" width="12" height="20" viewBox="0 0 12 20"><circle cx="6" cy="3.1" r="1.95" fill="#444"/><circle cx="6" cy="10.0" r="1.95" fill="#444"/><circle cx="6" cy="16.9" r="1.95" fill="#444"/></svg>
<div style="left:2368.4px;top:182px;width:996px;height:215.5px;background:#fff;border:1px solid #c9c9c9"></div>
<div style="left:2369.4px;top:183px;width:982px;height:31.8px;background:#efefef"></div>
<div style="left:2369.4px;top:213.5px;width:982px;height:1.5px;background:#dcdcdc"></div>
<div class="t" style="left:2379.9px;top:189.80px;line-height:20px;font-size:15.4px;color:#222">Request</div>
<div style="left:2458px;top:183.5px;width:1px;height:31.3px;background:#dadada"></div>
<div class="t" style="left:2463.5px;top:189.80px;line-height:20px;font-size:15.4px;color:#222">Payload</div>
<div style="left:2686.7px;top:183.5px;width:1px;height:31.3px;background:#dadada"></div>
<div class="t" style="left:2692.2px;top:189.80px;line-height:20px;font-size:15.4px;color:#222">Status code</div>
<div style="left:2797px;top:183.5px;width:1px;height:31.3px;background:#dadada"></div>
<div class="t" style="left:2802.5px;top:189.80px;line-height:20px;font-size:15.4px;color:#222">Response ...</div>
<div style="left:2886.5px;top:183.5px;width:1px;height:31.3px;background:#dadada"></div>
<div class="t" style="left:2892.0px;top:189.80px;line-height:20px;font-size:15.4px;color:#222">Error</div>
<div style="left:2959px;top:183.5px;width:1px;height:31.3px;background:#dadada"></div>
<div class="t" style="left:2964.5px;top:189.80px;line-height:20px;font-size:15.4px;color:#222">Timeout</div>
<div style="left:3032px;top:183.5px;width:1px;height:31.3px;background:#dadada"></div>
<div class="t" style="left:3037.5px;top:189.80px;line-height:20px;font-size:15.4px;color:#222">Length</div>
<div style="left:3121.5px;top:183.5px;width:1px;height:31.3px;background:#dadada"></div>
<div class="t" style="left:3127.0px;top:189.80px;line-height:20px;font-size:15.4px;color:#222">Comment</div>
<svg style="left:2441px;top:194px;" width="12" height="8" viewBox="0 0 12 8"><path d="M1,7 L6,2 L11,7" fill="none" stroke="#aaa" stroke-width="1.4"/></svg>
<div style="left:2369.4px;top:214.8px;width:982px;height:182px;overflow:hidden">
<div style="left:0;top:7.30px;width:982px;height:25px;background:#f8f8f8"></div>
<div class="t" style="left:10.5px;top:9.80px;line-height:20px;font-size:15.4px;color:#1e1e1e">1307</div>
<div class="t" style="left:94.29999999999973px;top:9.80px;line-height:20px;font-size:15.4px;color:#1e1e1e">null</div>
<div class="t" style="left:322.9000000000001px;top:9.80px;line-height:20px;font-size:15.4px;color:#1e1e1e">200</div>
<div class="t" style="left:433.0999999999999px;top:9.80px;line-height:20px;font-size:15.4px;color:#1e1e1e">28</div>
<div class="t" style="left:668.0px;top:9.80px;line-height:20px;font-size:15.4px;color:#1e1e1e">235</div>
<div style="left:0;top:32.30px;width:982px;height:25px;background:#fff"></div>
<div class="t" style="left:10.5px;top:34.80px;line-height:20px;font-size:15.4px;color:#1e1e1e">1308</div>
<div class="t" style="left:94.29999999999973px;top:34.80px;line-height:20px;font-size:15.4px;color:#1e1e1e">null</div>
<div class="t" style="left:322.9000000000001px;top:34.80px;line-height:20px;font-size:15.4px;color:#1e1e1e">200</div>
<div class="t" style="left:433.0999999999999px;top:34.80px;line-height:20px;font-size:15.4px;color:#1e1e1e">32</div>
<div class="t" style="left:668.0px;top:34.80px;line-height:20px;font-size:15.4px;color:#1e1e1e">235</div>
<div style="left:0;top:57.30px;width:982px;height:25px;background:#f8f8f8"></div>
<div class="t" style="left:10.5px;top:59.80px;line-height:20px;font-size:15.4px;color:#1e1e1e">1309</div>
<div class="t" style="left:94.29999999999973px;top:59.80px;line-height:20px;font-size:15.4px;color:#1e1e1e">null</div>
<div class="t" style="left:322.9000000000001px;top:59.80px;line-height:20px;font-size:15.4px;color:#1e1e1e">200</div>
<div class="t" style="left:433.0999999999999px;top:59.80px;line-height:20px;font-size:15.4px;color:#1e1e1e">30</div>
<div class="t" style="left:668.0px;top:59.80px;line-height:20px;font-size:15.4px;color:#1e1e1e">235</div>
<div style="left:0;top:82.30px;width:982px;height:25px;background:#fff"></div>
<div class="t" style="left:10.5px;top:84.80px;line-height:20px;font-size:15.4px;color:#1e1e1e">1310</div>
<div class="t" style="left:94.29999999999973px;top:84.80px;line-height:20px;font-size:15.4px;color:#1e1e1e">null</div>
<div class="t" style="left:322.9000000000001px;top:84.80px;line-height:20px;font-size:15.4px;color:#1e1e1e">200</div>
<div class="t" style="left:433.0999999999999px;top:84.80px;line-height:20px;font-size:15.4px;color:#1e1e1e">32</div>
<div class="t" style="left:668.0px;top:84.80px;line-height:20px;font-size:15.4px;color:#1e1e1e">235</div>
<div style="left:0;top:107.30px;width:982px;height:25px;background:#c6d6ec;border:1px solid #2a5a92"></div>
<div class="t" style="left:10.5px;top:109.80px;line-height:20px;font-size:15.4px;color:#1e1e1e">1311</div>
<div class="t" style="left:94.29999999999973px;top:109.80px;line-height:20px;font-size:15.4px;color:#1e1e1e">null</div>
<div class="t" style="left:322.9000000000001px;top:109.80px;line-height:20px;font-size:15.4px;color:#1e1e1e">200</div>
<div class="t" style="left:433.0999999999999px;top:109.80px;line-height:20px;font-size:15.4px;color:#1e1e1e">26</div>
<div class="t" style="left:668.0px;top:109.80px;line-height:20px;font-size:15.4px;color:#1e1e1e">8223</div>
<div style="left:0;top:132.30px;width:982px;height:25px;background:#fff"></div>
<div class="t" style="left:10.5px;top:134.80px;line-height:20px;font-size:15.4px;color:#1e1e1e">1312</div>
<div class="t" style="left:94.29999999999973px;top:134.80px;line-height:20px;font-size:15.4px;color:#1e1e1e">null</div>
<div class="t" style="left:322.9000000000001px;top:134.80px;line-height:20px;font-size:15.4px;color:#1e1e1e">200</div>
<div class="t" style="left:433.0999999999999px;top:134.80px;line-height:20px;font-size:15.4px;color:#1e1e1e">27</div>
<div class="t" style="left:668.0px;top:134.80px;line-height:20px;font-size:15.4px;color:#1e1e1e">8223</div>
<div style="left:0;top:157.30px;width:982px;height:25px;background:#f8f8f8"></div>
<div class="t" style="left:10.5px;top:159.80px;line-height:20px;font-size:15.4px;color:#1e1e1e">1313</div>
<div class="t" style="left:94.29999999999973px;top:159.80px;line-height:20px;font-size:15.4px;color:#1e1e1e">null</div>
<div class="t" style="left:322.9000000000001px;top:159.80px;line-height:20px;font-size:15.4px;color:#1e1e1e">200</div>
<div class="t" style="left:433.0999999999999px;top:159.80px;line-height:20px;font-size:15.4px;color:#1e1e1e">28</div>
<div class="t" style="left:668.0px;top:159.80px;line-height:20px;font-size:15.4px;color:#1e1e1e">8223</div>
<div style="left:0;top:0;width:982px;height:7.3px;background:#fff"></div>
</div>
<div style="left:3351.6px;top:251.5px;width:12px;height:11px;background:#e0e0e0"></div>
<div style="left:2341px;top:397.5px;width:1049px;height:3px;background:#fafafa"></div>
<div style="left:2341px;top:400px;width:1049px;height:1.2px;background:#d2d2d2"></div>
<div class="t" style="left:2362.9px;top:409.50px;line-height:20px;font-size:15.4px;color:#222">Request</div>
<div class="t" style="left:2458.9px;top:409.50px;line-height:20px;font-size:15.4px;color:#222">Response</div>
<div style="left:2343px;top:433px;width:96px;height:3px;background:#e8703a;border-radius:1px"></div>
<div style="left:2341px;top:436.3px;width:1049px;height:1px;background:#d8d8d8"></div>
<svg style="left:3366.2px;top:409.8px;" width="12" height="20" viewBox="0 0 12 20"><circle cx="6" cy="3.1" r="1.95" fill="#444"/><circle cx="6" cy="10.0" r="1.95" fill="#444"/><circle cx="6" cy="16.9" r="1.95" fill="#444"/></svg>
<div style="left:2341px;top:437.3px;width:1049px;height:770px;background:#fff"></div>
<div class="t" style="left:2362.6px;top:447.80px;line-height:20px;font-size:15.4px;color:#333">Pretty</div>
<div class="t" style="left:2441px;top:447.80px;line-height:20px;font-size:15.4px;color:#333">Raw</div>
<div class="t" style="left:2508.4px;top:447.80px;line-height:20px;font-size:15.4px;color:#333">Hex</div>
<div style="left:2343px;top:470.5px;width:77.8px;height:3px;background:#e8703a;border-radius:1px"></div>
<div style="left:2341px;top:473.3px;width:1049px;height:1px;background:#d8d8d8"></div>
<svg style="left:3241px;top:442.5px;" width="24" height="23" viewBox="0 0 24 23"><path d="M3,11.5 C6.5,3.5 17.5,3.5 21,11.5 C17.5,19.5 6.5,19.5 3,11.5 Z" fill="none" stroke="#333" stroke-width="1.9"/><path d="M9.3,13.5 a3.2,3.2 0 0 1 5.5,-3.2" fill="none" stroke="#333" stroke-width="1.9"/><path d="M3.5,2.5 L21,21" stroke="#333" stroke-width="1.9" stroke-linecap="round"/></svg>
<div style="left:3277.9px;top:443.2px;width:24.8px;height:23.7px;background:#2d69ad;border-radius:4px"></div>
<svg style="left:3277.9px;top:443.2px;" width="24.8" height="23.7" viewBox="0 0 24.8 23.7"><path d="M5.7,6.0 H18.6 M5.7,11.4 H16 a3.1,3.1 0 0 1 0,6.2 H12.6 M5.7,17.0 H9.2" fill="none" stroke="#fff" stroke-width="1.9" stroke-linecap="round"/><path d="M14.6,15.3 L12.2,17.6 L14.6,19.9" fill="none" stroke="#fff" stroke-width="1.7" stroke-linecap="round" stroke-linejoin="round"/></svg>
<div class="t" style="left:3320.6px;top:443.30px;line-height:22px;font-size:18px;color:#111;letter-spacing:-0.5px">\n</div>
<svg style="left:3358.9px;top:448.1px;" width="13.5" height="14" viewBox="0 0 13.5 14"><rect x="0" y="0.00" width="13.5" height="2.1" fill="#111"/><rect x="0" y="4.95" width="13.5" height="2.1" fill="#111"/><rect x="0" y="9.90" width="13.5" height="2.1" fill="#111"/></svg>
<div style="left:2370.3px;top:474.3px;width:1px;height:733px;background:#dddddd"></div>
<div style="left:2371px;top:592px;width:1007px;height:18.4px;background:#eeeeee"></div>
<div class="ln" style="left:2340.5px;top:479.50px;width:24px;line-height:18.8px">1</div>
<div class="ln" style="left:2340.5px;top:498.30px;width:24px;line-height:18.8px">2</div>
<div class="ln" style="left:2340.5px;top:517.10px;width:24px;line-height:18.8px">3</div>
<div class="ln" style="left:2340.5px;top:535.90px;width:24px;line-height:18.8px">4</div>
<div class="ln" style="left:2340.5px;top:554.70px;width:24px;line-height:18.8px">5</div>
<div class="ln" style="left:2340.5px;top:573.50px;width:24px;line-height:18.8px">6</div>
<div class="ln" style="left:2340.5px;top:592.30px;width:24px;line-height:18.8px">7</div>
<div class="ln" style="left:2340.5px;top:611.10px;width:24px;line-height:18.8px">8</div>
<div class="ln" style="left:2340.5px;top:629.90px;width:24px;line-height:18.8px">9</div>
<div class="ln" style="left:2340.5px;top:648.70px;width:24px;line-height:18.8px">10</div>
<div class="ln" style="left:2340.5px;top:667.50px;width:24px;line-height:18.8px">11</div>
<div class="ln" style="left:2340.5px;top:686.30px;width:24px;line-height:18.8px">12</div>
<div class="ln" style="left:2340.5px;top:705.10px;width:24px;line-height:18.8px">13</div>
<div class="ln" style="left:2340.5px;top:723.90px;width:24px;line-height:18.8px">14</div>
<div class="ln" style="left:2340.5px;top:742.70px;width:24px;line-height:18.8px">15</div>
<div class="ln" style="left:2340.5px;top:761.50px;width:24px;line-height:18.8px">16</div>
<div class="ln" style="left:2340.5px;top:780.30px;width:24px;line-height:18.8px">17</div>
<div class="ln" style="left:2340.5px;top:799.10px;width:24px;line-height:18.8px">18</div>
<div class="code" style="left:2379.4px;top:478.0px;line-height:18.8px">POST /commands/cnc HTTP/1.1
<span class="k">Host</span>: winatp-gw-weu3.microsoft.com
<span class="k">Content-Type</span>: application/json
<span class="k">Accept-Encoding</span>: gzip, deflate, br
<span class="k">Content-Length</span>: 333
<span class="k">Connection</span>: keep-alive

{
  <span class="k">"machineid"</span>:<span class="g">"ae</span>
  <span class="k">"tenantid"</span>:<span class="g">"da4</span>
  <span class="k">"clientver"</span>:<span class="g">"10.8737.22621.3447"</span>,
  <span class="k">"configurationmodules"</span>:[
    {
      <span class="k">"moduleType"</span>:<span class="g">"AccountPolicyEnforcer"</span>,
      <span class="k">"hash"</span>:<span class="g">"7828356bce64b1fb2426bc922d4cbad795be374b"</span>
    }
  ]
}</div>
<div style="left:2341px;top:1207px;width:1049px;height:1px;background:#d0d0d0"></div>
<div style="left:2341px;top:1208px;width:1049px;height:53px;background:#fff"></div>
<svg style="left:2349.0px;top:1221.7px;" width="30" height="30" viewBox="0 0 30 30"><circle cx="15.0" cy="15.0" r="13" fill="none" stroke="#404040" stroke-width="2"/><g transform="translate(15.00,15.00) scale(1.000)"><path d="M-4.2,-3.2 a4.2,4.2 0 1 1 6.0,3.8 c-1.5,0.8 -1.8,1.5 -1.8,2.9" fill="none" stroke="#404040" stroke-width="1.90" stroke-linecap="round"/><circle cx="0" cy="6.3" r="1.25" fill="#404040"/></g></svg>
<svg style="left:2383.6px;top:1220.7px;" width="32" height="32" viewBox="0 0 32 32"><path d="M16.00,6.12 L17.70,6.27 L19.23,3.41 L22.62,4.81 L21.68,7.92 L22.99,9.01 L24.08,10.32 L27.19,9.38 L28.59,12.77 L25.73,14.30 L25.88,16.00 L25.73,17.70 L28.59,19.23 L27.19,22.62 L24.08,21.68 L22.99,22.99 L21.68,24.08 L22.62,27.19 L19.23,28.59 L17.70,25.73 L16.00,25.88 L14.30,25.73 L12.77,28.59 L9.38,27.19 L10.32,24.08 L9.01,22.99 L7.92,21.68 L4.81,22.62 L3.41,19.23 L6.27,17.70 L6.12,16.00 L6.27,14.30 L3.41,12.77 L4.81,9.38 L7.92,10.32 L9.01,9.01 L10.32,7.92 L9.38,4.81 L12.77,3.41 L14.30,6.27Z" fill="none" stroke="#404040" stroke-width="2.2" stroke-linejoin="round"/><circle cx="16.0" cy="16.0" r="4.68" fill="none" stroke="#404040" stroke-width="2.2"/></svg>
<div style="left:2421.5px;top:1220.4px;width:31px;height:30.5px;border:1px solid #c8c8c8;border-radius:4px;background:#fff"></div>
<svg style="left:2421.5px;top:1220.4px;" width="31" height="30.5" viewBox="0 0 31 30.5"><path d="M22.5,15.2 H8.5 M14.5,9.2 L8.5,15.2 L14.5,21.2" fill="none" stroke="#111" stroke-width="2.3" stroke-linecap="round" stroke-linejoin="round"/></svg>
<div style="left:2459.3px;top:1220.4px;width:31px;height:30.5px;border:1px solid #c8c8c8;border-radius:4px;background:#fff"></div>
<svg style="left:2459.3px;top:1220.4px;" width="31" height="30.5" viewBox="0 0 31 30.5"><path d="M8.5,15.2 H22.5 M16.5,9.2 L22.5,15.2 L16.5,21.2" fill="none" stroke="#111" stroke-width="2.3" stroke-linecap="round" stroke-linejoin="round"/></svg>
<div style="left:2503.5px;top:1221.7px;width:761.0px;height:30px;border:1px solid #c8c8c8;border-radius:5px;background:#fff"></div>
<div class="t" style="left:2514.5px;top:1226.70px;line-height:20px;color:#7a7a7a;font-size:15px">Search</div>
<svg style="left:3238.5px;top:1227.7px;" width="18" height="18" viewBox="0 0 18 18"><circle cx="11" cy="7" r="5.5" fill="none" stroke="#444" stroke-width="1.8"/><path d="M7,11 L2,16" stroke="#444" stroke-width="2" stroke-linecap="round"/></svg>
<div class="t" style="left:3293.3px;top:1226.70px;line-height:20px;color:#222;font-size:16.2px">0 highlights</div>
<div style="left:3390.3px;top:83px;width:46px;height:1178px;background:#f2f2f2"></div>
<div style="left:3390.3px;top:83px;width:1px;height:1178px;background:#dadada"></div>
<div style="left:3391px;top:252.4px;width:45px;height:1px;background:#dadada"></div>
<div style="left:3391px;top:466.8px;width:45px;height:1px;background:#dadada"></div>
<div style="left:3391px;top:627.2px;width:45px;height:1px;background:#dadada"></div>
<div style="left:3391px;top:628px;width:45px;height:618px;background:#fcfcfc"></div>
<div style="left:3391px;top:1246.6px;width:45px;height:1.3px;background:#c8c8c8"></div>
<div style="left:3411px;top:1259px;width:7px;height:2px;background:#333"></div>
<svg style="left:3404px;top:104px;" width="18" height="24" viewBox="0 0 18 24"><path d="M14.5,3.2 Q11,0.8 7.5,2.3 Q4,4 6.5,7 Q8,8.3 11.5,10.3 Q15.5,12.7 13.8,15.6 Q12.8,17.2 10.5,17.6" fill="none" stroke="#3a3a3a" stroke-width="2" stroke-linecap="round"/><path d="M7.5,6.4 Q4.2,8.6 6.3,11.5 Q7.3,12.7 10.8,14.6 Q14.3,16.6 12.6,19.7 Q10.5,22.6 5.5,20.6" fill="none" stroke="#3a3a3a" stroke-width="2" stroke-linecap="round"/></svg>
<div class="t" style="left:3413.5px;top:184.2px;line-height:20px;font-size:18px;color:#111;transform:translate(-50%,-50%) rotate(90deg)">Payloads</div>
<svg style="left:3402px;top:271px;" width="24" height="24" viewBox="0 0 24 24"><circle cx="12" cy="12" r="10" fill="none" stroke="#444" stroke-width="1.8"/><path d="M12,2 V12 H22" fill="none" stroke="#444" stroke-width="1.8"/></svg>
<div class="t" style="left:3413.5px;top:375.2px;line-height:20px;font-size:18px;color:#111;transform:translate(-50%,-50%) rotate(90deg)">Resource pool</div>
<svg style="left:3400.2px;top:483.2px;" width="28" height="28" viewBox="0 0 28 28"><path d="M14.00,5.26 L15.50,5.39 L16.86,2.86 L19.85,4.10 L19.03,6.85 L20.18,7.82 L21.15,8.97 L23.90,8.15 L25.14,11.14 L22.61,12.50 L22.74,14.00 L22.61,15.50 L25.14,16.86 L23.90,19.85 L21.15,19.03 L20.18,20.18 L19.03,21.15 L19.85,23.90 L16.86,25.14 L15.50,22.61 L14.00,22.74 L12.50,22.61 L11.14,25.14 L8.15,23.90 L8.97,21.15 L7.82,20.18 L6.85,19.03 L4.10,19.85 L2.86,16.86 L5.39,15.50 L5.26,14.00 L5.39,12.50 L2.86,11.14 L4.10,8.15 L6.85,8.97 L7.82,7.82 L8.97,6.85 L8.15,4.10 L11.14,2.86 L12.50,5.39Z" fill="none" stroke="#404040" stroke-width="1.9" stroke-linejoin="round"/><circle cx="14.0" cy="14.0" r="4.14" fill="none" stroke="#404040" stroke-width="1.9"/></svg>
<div class="t" style="left:3413.5px;top:561.7px;line-height:20px;font-size:18px;color:#111;transform:translate(-50%,-50%) rotate(90deg)">Settings</div>
<div style="left:2341px;top:0px;width:2px;height:1261px;background:#5a5a5a"></div>
<div style="left:2343px;top:0px;width:26px;height:1261px;background:linear-gradient(to right,rgba(0,0,0,0.15),rgba(0,0,0,0.05) 45%,rgba(0,0,0,0))"></div>
<div style="left:49.5px;top:445px;width:1272.2px;height:183.6px;background:#000"></div>
<div style="left:363px;top:628.5px;width:10px;height:1.5px;background:#000"></div>
<div style="left:50.7px;top:669.6px;width:1278.3px;height:167.4px;background:#000"></div>
<div style="left:2543.3px;top:626.9px;width:424.5px;height:36.7px;background:#000"></div>
</body></html>
